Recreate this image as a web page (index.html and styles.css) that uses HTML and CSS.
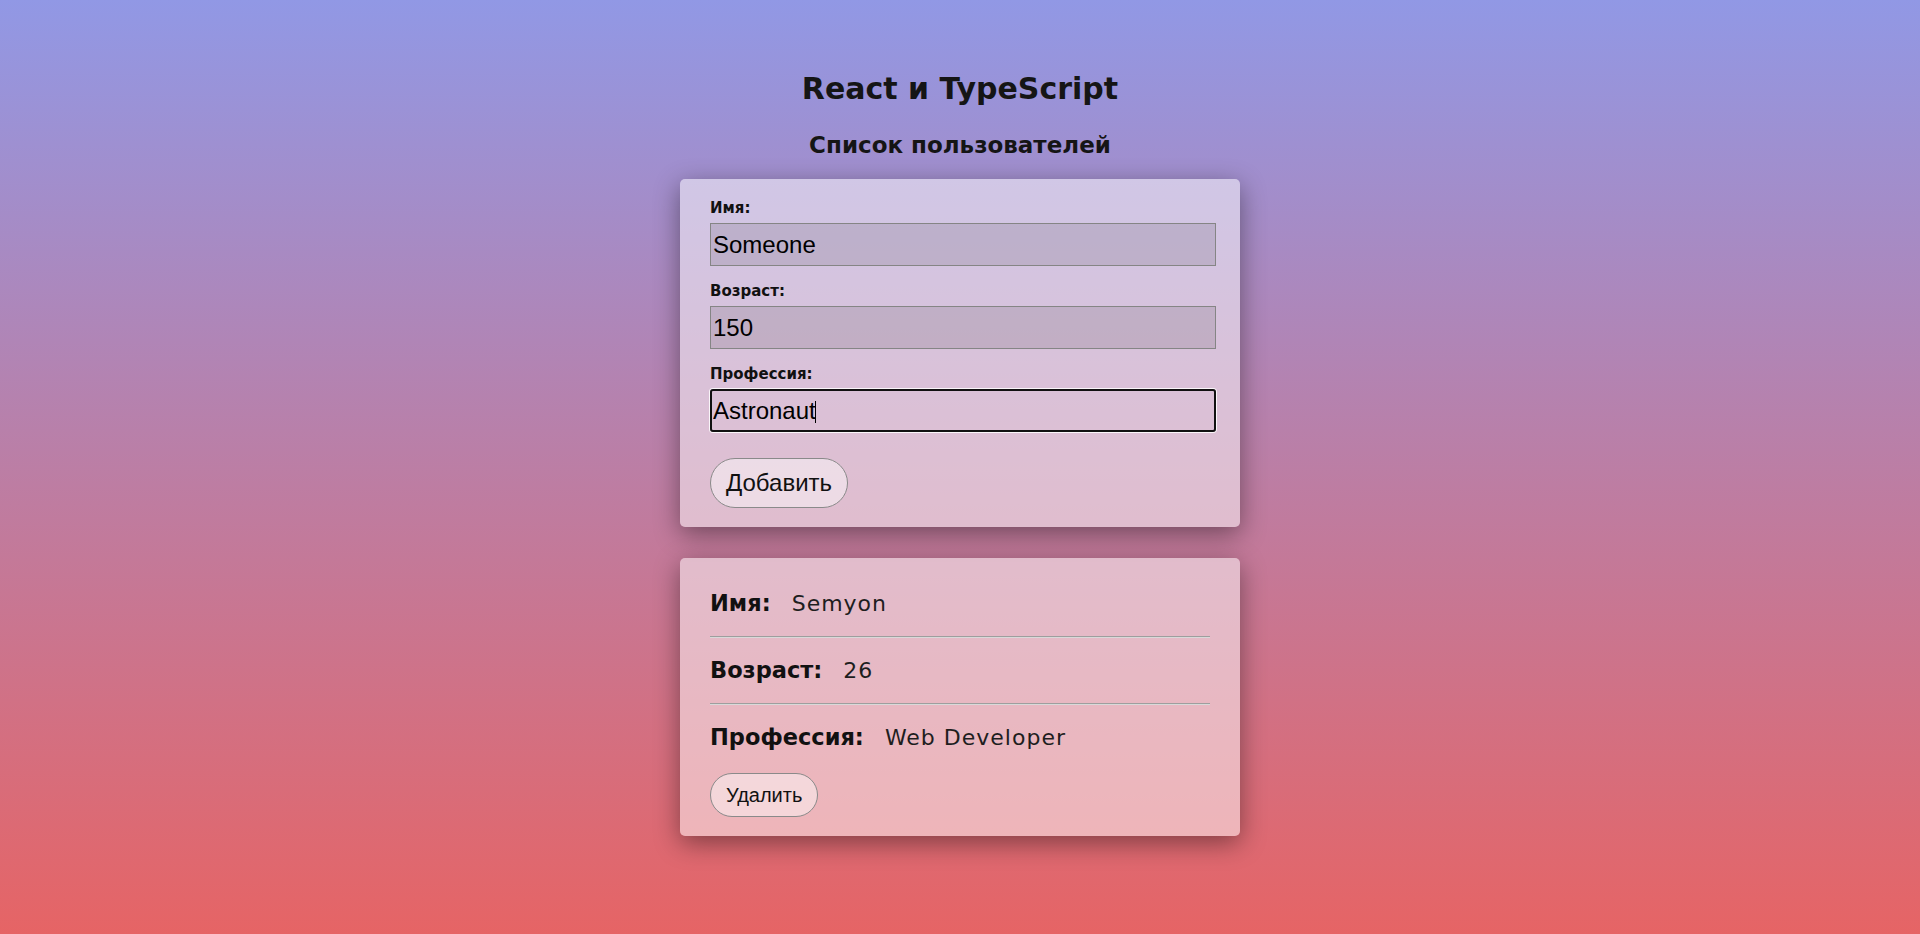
FILE: index.html
```html
<!DOCTYPE html>
<html lang="ru">
<head>
<meta charset="utf-8">
<title>React и TypeScript</title>
<link rel="stylesheet" href="styles.css">
</head>
<body>
<main class="app">
  <h1 class="title">React и TypeScript</h1>
  <h2 class="subtitle">Список пользователей</h2>

  <form class="card form-card">
    <div class="field">
      <label class="field-label" for="name">Имя:</label>
      <input class="field-input" id="name" type="text" value="Someone">
    </div>
    <div class="field">
      <label class="field-label" for="age">Возраст:</label>
      <input class="field-input" id="age" type="text" value="150">
    </div>
    <div class="field">
      <label class="field-label" for="job">Профессия:</label>
      <span class="input-wrap">
        <input class="field-input is-focused" id="job" type="text" value="Astronaut">
        <span class="caret"></span>
      </span>
    </div>
    <button class="btn btn-add" type="button">Добавить</button>
  </form>

  <section class="card user-card">
    <div class="user-row"><span class="user-key">Имя:</span><span class="user-value">Semyon</span></div>
    <hr class="divider">
    <div class="user-row"><span class="user-key">Возраст:</span><span class="user-value">26</span></div>
    <hr class="divider">
    <div class="user-row"><span class="user-key">Профессия:</span><span class="user-value">Web Developer</span></div>
    <button class="btn btn-delete" type="button">Удалить</button>
  </section>
</main>
</body>
</html>
```
FILE: styles.css
```css
* { box-sizing: border-box; }

html, body { height: 100%; }

body {
  margin: 0;
  min-height: 100vh;
  background: linear-gradient(to bottom, #9198e5, #e66465);
  font-family: "DejaVu Sans", "Noto Sans", sans-serif;
  color: #111;
}

.app {
  display: flex;
  flex-direction: column;
  align-items: center;
  padding-top: 71px;
}

.title {
  margin: 0;
  font-size: 30px;
  line-height: 36px;
  font-weight: 700;
  color: #151515;
}

.subtitle {
  margin: 24px 0 20px;
  font-size: 23px;
  line-height: 28px;
  font-weight: 700;
  color: #151515;
}

.card {
  width: 560px;
  padding: 0 30px;
  background: rgba(255, 255, 255, 0.5);
  border-radius: 5px;
  box-shadow: 0 7px 26px rgba(0, 0, 0, 0.42);
}

.form-card {
  display: flex;
  flex-direction: column;
  align-items: flex-start;
  padding-top: 20px;
  padding-bottom: 19px;
}

.field {
  display: flex;
  flex-direction: column;
  width: 100%;
  margin-bottom: 16px;
}

.field-label {
  font-size: 15px;
  line-height: 18px;
  font-weight: 700;
  margin-bottom: 6px;
  color: #111;
}

.input-wrap {
  position: relative;
  display: block;
  width: 100%;
}

.field-input {
  display: block;
  width: calc(100% + 6px);
  height: 43px;
  margin: 0;
  padding: 0 2px;
  border: 1px solid #858585;
  border-radius: 0;
  background: rgba(0, 0, 0, 0.1);
  font-family: "Liberation Sans", Arial, sans-serif;
  font-size: 24px;
  color: #000;
  outline: none;
}

.field-input.is-focused {
  background: transparent;
  border: 2px solid #111;
  border-radius: 3px;
  padding: 0 1px;
  box-shadow: 0 0 0 1px rgba(255, 255, 255, 0.85);
}

.caret {
  position: absolute;
  left: 105px;
  top: 12px;
  width: 1px;
  height: 22px;
  background: #000;
}

.btn {
  margin: 0;
  border: 1px solid #8a8a8a;
  background: rgba(255, 255, 255, 0.45);
  font-family: "Liberation Sans", Arial, sans-serif;
  color: #111;
  cursor: pointer;
}

.btn-add {
  margin-top: 10px;
  height: 50px;
  padding: 0 15px;
  border-radius: 25px;
  font-size: 24px;
}

.user-card {
  margin-top: 31px;
  padding-top: 32px;
  padding-bottom: 19px;
  display: flex;
  flex-direction: column;
  align-items: flex-start;
}

.user-row {
  display: flex;
  align-items: baseline;
  font-size: 22px;
  line-height: 27px;
}

.user-key {
  font-size: 22.5px;
  font-weight: 700;
  color: #111;
  margin-right: 21px;
}

.user-value {
  font-weight: 400;
  color: #1e1e1e;
  letter-spacing: 1px;
}

.divider {
  width: 100%;
  margin: 19px 0 19px;
  height: 2px;
  border: 0;
  border-top: 1px solid #9e9e9e;
  border-bottom: 1px solid #d9d9d9;
}

.btn-delete {
  margin-top: 22px;
  height: 44px;
  padding: 0 15px;
  border-radius: 22px;
  font-size: 20px;
}
```
